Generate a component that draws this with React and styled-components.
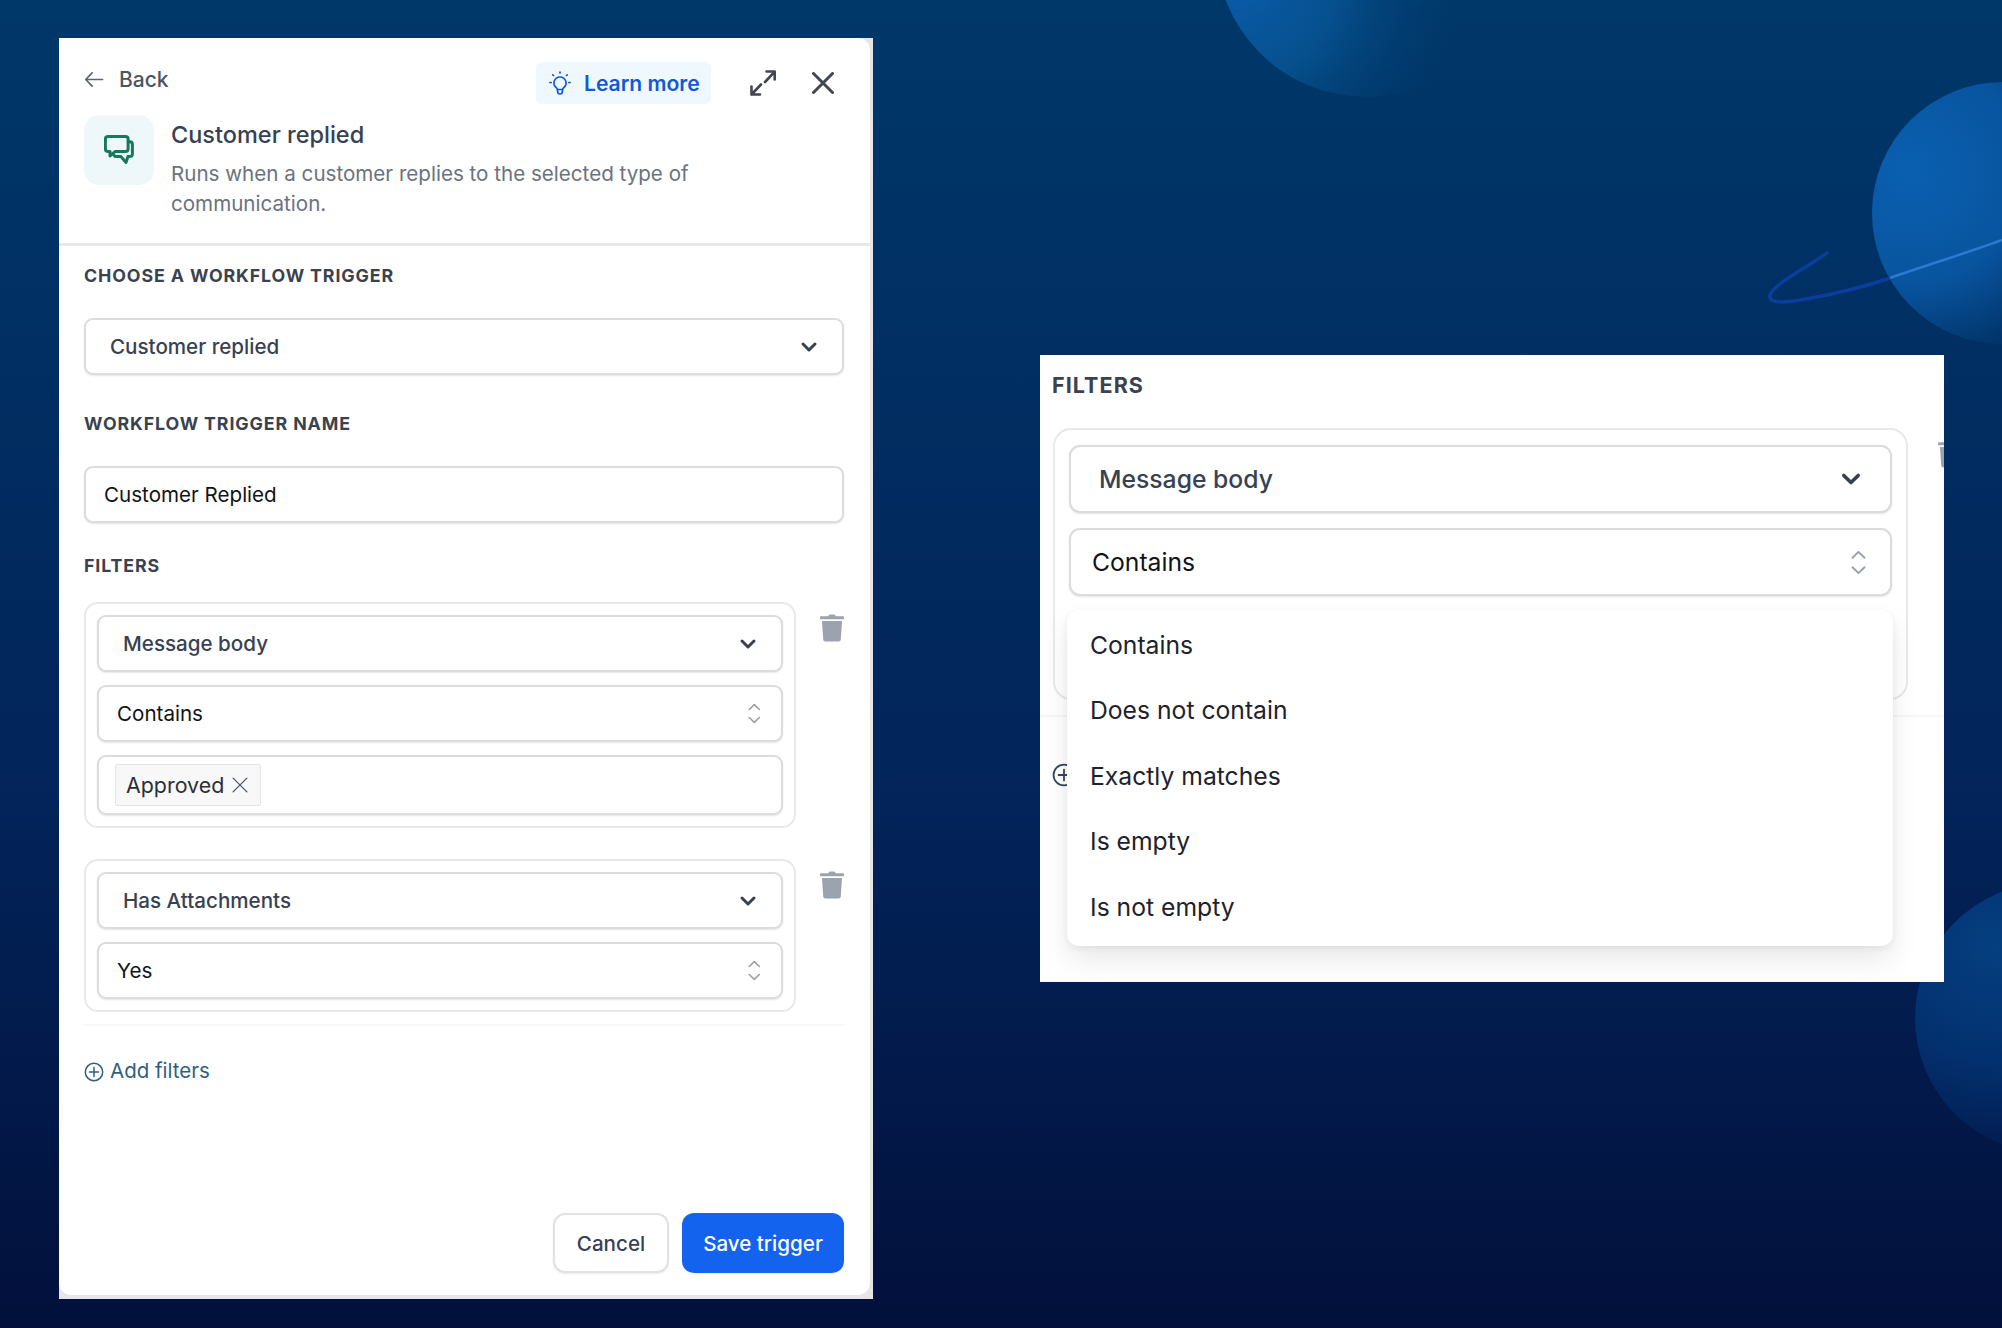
import React from 'react';
import styled, { createGlobalStyle } from 'styled-components';

const GlobalStyle = createGlobalStyle`
  html, body {
    margin: 0;
    padding: 0;
    background: #02133f;
    font-family: Inter, "Liberation Sans", sans-serif;
  }
  * { box-sizing: border-box; }
`;

const Stage = styled.div`
  position: relative;
  width: 2002px;
  height: 1328px;
  overflow: hidden;
  display: flex;
  align-items: flex-start;
  gap: 167px;
  padding: 38px 0 0 59px;
  background: linear-gradient(180deg, #003869 0%, #012f63 26%, #02245a 60%, #021a4b 80%, #02103b 100%);
`;

const Backdrop = styled.svg`
  position: absolute;
  inset: 0;
`;

const LeftPanel = styled.div`
  position: relative;
  width: 814px;
  height: 1261px;
  flex: none;
  padding: 0 3px 4px 0;
  background: #e6e6e8;
`;

const PanelInner = styled.div`
  display: flex;
  flex-direction: column;
  height: 100%;
  background: #fff;
  border-radius: 0 12px 12px 12px;
`;

const TopRow = styled.div`
  display: flex;
  align-items: flex-start;
  padding: 24px 36px 0 25px;
`;

const BackLink = styled.a`
  display: flex;
  align-items: center;
  gap: 15px;
  height: 34px;
  font-size: 21px;
  font-weight: 500;
  color: #4b5563;
`;

const TopActions = styled.div`
  display: flex;
  align-items: center;
  margin-left: auto;
  height: 42px;
`;

const LearnMore = styled.button`
  display: flex;
  align-items: center;
  gap: 13px;
  height: 42px;
  width: 175px;
  padding: 0 0 0 13px;
  border: 0;
  border-radius: 6px;
  background: #eff8fe;
  color: #1358d8;
  font: 600 21.1px Inter, sans-serif;
`;

const IconButton = styled.span`
  display: flex;
  margin-left: ${({ $gap }) => $gap}px;
  color: #41464f;
`;

const Summary = styled.div`
  display: flex;
  gap: 17px;
  padding: 11px 25px 24px;
  border-bottom: 3px solid #e8e8ea;
`;

const IconTile = styled.div`
  display: flex;
  align-items: center;
  justify-content: center;
  flex: none;
  width: 70px;
  height: 70px;
  border-radius: 15px;
  background: #eef8fb;
`;

const SummaryText = styled.div`
  padding-top: 5px;
`;

const Title = styled.div`
  font-size: 23.5px;
  font-weight: 500;
  line-height: 30px;
  color: #374151;
`;

const Description = styled.div`
  margin-top: 9px;
  width: 530px;
  font-size: 20.6px;
  line-height: 30px;
  color: #6b7280;
`;

const Body = styled.div`
  display: flex;
  flex: 1;
  flex-direction: column;
  padding: 18px 26px 22px 25px;
`;

const Label = styled.div`
  font-size: ${({ $large }) => ($large ? 21.5 : 17.8)}px;
  font-weight: 700;
  line-height: 24px;
  letter-spacing: 0.05em;
  color: #3a4250;
  margin-top: ${({ $top }) => $top || 0}px;
  margin-bottom: ${({ $bottom }) => $bottom}px;
`;

const rightPadding = ({ $large, $inset }) => {
  if ($large) return $inset ? 27 : 24;
  return $inset ? 23 : 20;
};

const leftPadding = ({ $large, $inset }) => {
  if ($large) return $inset ? 28 : 21;
  return $inset ? 24 : 18;
};

const Field = styled.div`
  display: flex;
  align-items: center;
  justify-content: space-between;
  flex: none;
  height: ${({ $large }) => ($large ? 68 : 57)}px;
  padding: 0 ${rightPadding}px 0 ${leftPadding}px;
  background: #fff;
  border: 2px solid #dcdcdf;
  border-radius: ${({ $large }) => ($large ? 11 : 9)}px;
  box-shadow: 0 1px 2px rgba(0, 0, 0, 0.1);
  font-size: ${({ $large }) => ($large ? 24.7 : 20.6)}px;
  font-weight: ${({ $muted }) => ($muted ? 500 : 400)};
  color: ${({ $muted }) => ($muted ? '#374151' : '#111318')};
`;

const Chips = styled(Field)`
  height: 60px;
  padding: 0 0 0 16px;
`;

const Chip = styled.span`
  display: flex;
  align-items: center;
  gap: 8px;
  height: 42px;
  padding: 0 12px 0 10px;
  background: #f8f8f9;
  border: 1px solid #e4e4e7;
  border-radius: 2px;
  font-size: 21.4px;
  color: #2b2f36;
`;

const FilterRow = styled.div`
  display: flex;
  align-items: flex-start;
  gap: 24px;
  margin-bottom: ${({ $bottom }) => $bottom}px;
`;

const FilterCard = styled.div`
  display: flex;
  flex-direction: column;
  gap: 13px;
  flex: none;
  width: 712px;
  padding: 11px;
  border: 2px solid #e9e9eb;
  border-radius: 14px;
`;

const TrashSlot = styled.span`
  display: flex;
  flex: none;
  margin-top: 12px;
`;

const FaintRule = styled.div`
  height: 2px;
  background: #f8f8f8;
`;

const AddFilters = styled.div`
  display: flex;
  align-items: center;
  gap: 6px;
  margin-top: 32px;
  height: 24px;
  font-size: 20.5px;
  color: #2f5f80;
  svg { margin-top: 3px; }
`;

const Footer = styled.div`
  display: flex;
  justify-content: flex-end;
  gap: 13px;
  margin-top: auto;
`;

const FooterButton = styled.button`
  height: 60px;
  width: ${({ $primary }) => ($primary ? 162 : 116)}px;
  border: ${({ $primary }) => ($primary ? '0' : '2px solid #e2e2e5')};
  border-radius: 12px;
  background: ${({ $primary }) => ($primary ? '#1463ef' : '#fff')};
  color: ${({ $primary }) => ($primary ? '#fff' : '#374151')};
  box-shadow: 0 1px 2px rgba(0, 0, 0, 0.08);
  font: 500 20.6px Inter, sans-serif;
`;

const RightPanel = styled.div`
  position: relative;
  flex: none;
  width: 904px;
  height: 627px;
  margin-top: 317px;
  padding-top: 18px;
  overflow: hidden;
  background: #fff;
`;

const RightLabelRow = styled.div`
  padding-left: 12px;
`;

const RightRow = styled.div`
  display: flex;
  align-items: flex-start;
  gap: 30px;
  padding-left: 13px;
`;

const RightCard = styled.div`
  position: relative;
  display: flex;
  flex-direction: column;
  gap: 15px;
  flex: none;
  width: 855px;
  height: 272px;
  padding: 15px 14px;
  border: 2px solid #e9e9eb;
  border-radius: 18px;
`;

const Menu = styled.ul`
  position: absolute;
  left: 12px;
  top: 180px;
  z-index: 2;
  width: 826px;
  height: 336px;
  margin: 0;
  padding: 2px 0 0;
  list-style: none;
  background: #fff;
  border-radius: 12px;
  box-shadow: 0 14px 28px rgba(0, 0, 0, 0.09), 0 2px 6px rgba(0, 0, 0, 0.06);
`;

const MenuItem = styled.li`
  display: flex;
  align-items: center;
  height: 65.5px;
  padding-left: 23px;
  font-size: 24.7px;
  color: #1d222c;
`;

const RightRule = styled.div`
  height: 2px;
  margin-top: 15px;
  background: #f6f6f6;
`;

const RightAdd = styled.div`
  display: flex;
  margin-top: 46px;
  padding-left: 12px;
`;

const Chevron = ({ size = 20 }) => (
  <svg width={size} height={size} viewBox="0 0 20 20" fill="none" stroke="#374151" strokeWidth="3" strokeLinecap="round" strokeLinejoin="round">
    <path d="M4 7l6 6 6-6" />
  </svg>
);

const UpDown = ({ height = 21 }) => (
  <svg width={height * 0.6} height={height} viewBox="0 0 12 20" fill="none" stroke="#9a9ea6" strokeWidth="1.500" strokeLinecap="round" strokeLinejoin="round">
    <path d="M1.200 6.200L6 1.500l4.800 4.700M1.200 13.800L6 18.500l4.800-4.700" />
  </svg>
);

const Trash = () => (
  <svg width="24" height="28" viewBox="0 0 24 28" fill="#9ca3af">
    <path d="M8.500 2.200C8.800 1 9.600.6 10.600.6h2.800c1 0 1.800.4 2.100 1.600H23c.6 0 1 .4 1 1v1.400c0 .3-.3.6-.6.6H.6c-.3 0-.6-.3-.6-.6V3.200c0-.6.4-1 1-1z" />
    <path d="M2 7h20l-1.200 18.200c-.1 1.300-1 2.300-2.300 2.300h-13c-1.300 0-2.200-1-2.300-2.300z" />
  </svg>
);

const PlusCircle = ({ size = 20, color = '#2f5f80' }) => (
  <svg width={size} height={size} viewBox="0 0 20 20" fill="none" stroke={color} strokeWidth="1.500" strokeLinecap="round">
    <circle cx="10" cy="10" r="8.700" />
    <path d="M10 5.500v9M5.500 10h9" />
  </svg>
);

const ChatBubbles = () => (
  <svg width="30" height="30" viewBox="0 0 30 30" fill="none" stroke="#157a5c" strokeWidth="3" strokeLinecap="round" strokeLinejoin="round">
    <path d="M4 1.500h17.500a2.600 2.600 0 0 1 2.600 2.600v9.800a2.600 2.600 0 0 1-2.600 2.600H11l-5 4.500v-4.500H4a2.600 2.600 0 0 1-2.600-2.600V4.100A2.600 2.600 0 0 1 4 1.500z" />
    <path d="M24.300 6.800h1.500a2.600 2.600 0 0 1 2.600 2.600v9.600a2.600 2.600 0 0 1-2.600 2.600h-1.900L22 27.500l-5-5.900h-5.500l-2-1.800" />
  </svg>
);

const Bulb = () => (
  <svg width="22" height="24" viewBox="0 0 22 24" fill="none" stroke="#1358d8" strokeWidth="1.700" strokeLinecap="round" strokeLinejoin="round">
    <path d="M11 6a6 6 0 0 0-3.600 10.800c.6.500.9 1 .9 1.700h5.400c0-.7.300-1.200.9-1.700A6 6 0 0 0 11 6z" />
    <path d="M8.600 18.500v1.800c0 1.600 1 2.700 2.400 2.700s2.400-1.100 2.400-2.700v-1.800" />
    <path d="M11 1v1M3.800 3.800l.7.700M18.200 3.800l-.7.700M.8 11.500h1.400M19.800 11.500h1.400" />
  </svg>
);

const ExpandIcon = () => (
  <svg width="26" height="26" viewBox="0 0 26 26" fill="none" stroke="currentColor" strokeWidth="2.600" strokeLinecap="round" strokeLinejoin="round">
    <path d="M15 12L24.500 1.800M16.500 1.500h8.200v8M11 14.500L1.500 24.500M1.500 16.500v8h8.500" />
  </svg>
);

const CloseIcon = ({ size = 22, stroke = 3, color = 'currentColor' }) => (
  <svg width={size} height={size} viewBox="0 0 22 22" fill="none" stroke={color} strokeWidth={stroke} strokeLinecap="round">
    <path d="M1.500 1.500l19 19M20.500 1.500l-19 19" />
  </svg>
);

const BackArrow = () => (
  <svg width="20" height="17" viewBox="0 0 21 18" fill="none" stroke="#5b6470" strokeWidth="1.800" strokeLinecap="round" strokeLinejoin="round">
    <path d="M19.500 9H2M8.500 2L1.800 9l6.700 7" />
  </svg>
);

const Scenery = () => (
  <Backdrop width="2002" height="1328" viewBox="0 0 2002 1328">
    <defs>
      <radialGradient id="planetTop" gradientUnits="userSpaceOnUse" cx="1235" cy="-20" r="230">
        <stop offset="0" stopColor="#0a5cab" />
        <stop offset="0.45" stopColor="#06518f" stopOpacity="0.95" />
        <stop offset="1" stopColor="#013a6f" stopOpacity="0" />
      </radialGradient>
      <radialGradient id="planetRight" gradientUnits="userSpaceOnUse" cx="1910" cy="170" r="190">
        <stop offset="0" stopColor="#0a60b0" />
        <stop offset="0.6" stopColor="#08549f" />
        <stop offset="1" stopColor="#02356b" />
      </radialGradient>
      <radialGradient id="planetLow" gradientUnits="userSpaceOnUse" cx="1995" cy="945" r="215">
        <stop offset="0" stopColor="#053f80" />
        <stop offset="0.55" stopColor="#03306e" />
        <stop offset="1" stopColor="#021a4c" />
      </radialGradient>
    </defs>
    <circle cx="1366" cy="-53" r="150" fill="url(#planetTop)" />
    <circle cx="2003" cy="213" r="131" fill="url(#planetRight)" />
    <circle cx="2050" cy="1018" r="135" fill="url(#planetLow)" />
    <path d="M1827 253C1800 272 1775 283 1770 295C1768 304 1785 303 1806 299C1840 293 1870 285 1890 278" fill="none" stroke="#0a3d9c" strokeWidth="3.500" strokeLinecap="round" />
    <path d="M1890 278C1930 264 1970 252 2002 240" fill="none" stroke="#2c7ad0" strokeWidth="2.500" />
  </Backdrop>
);

const App = () => (
  <>
    <GlobalStyle />
    <Stage>
      <Scenery />

      <LeftPanel>
        <PanelInner>
          <TopRow>
            <BackLink><BackArrow />Back</BackLink>
            <TopActions>
              <LearnMore><Bulb />Learn more</LearnMore>
              <IconButton $gap={39}><ExpandIcon /></IconButton>
              <IconButton $gap={36}><CloseIcon /></IconButton>
            </TopActions>
          </TopRow>

          <Summary>
            <IconTile><ChatBubbles /></IconTile>
            <SummaryText>
              <Title>Customer replied</Title>
              <Description>Runs when a customer replies to the selected type of communication.</Description>
            </SummaryText>
          </Summary>

          <Body>
            <Label $bottom={30}>CHOOSE A WORKFLOW TRIGGER</Label>
            <Field $muted $inset>Customer replied<Chevron /></Field>

            <Label $top={37} $bottom={30}>WORKFLOW TRIGGER NAME</Label>
            <Field>Customer Replied</Field>

            <Label $top={31} $bottom={24}>FILTERS</Label>
            <FilterRow $bottom={31}>
              <FilterCard>
                <Field $muted $inset>Message body<Chevron /></Field>
                <Field>Contains<UpDown /></Field>
                <Chips>
                  <Chip>Approved<CloseIcon size={16} stroke={1.800} color="#4b5563" /></Chip>
                </Chips>
              </FilterCard>
              <TrashSlot><Trash /></TrashSlot>
            </FilterRow>
            <FilterRow $bottom={12}>
              <FilterCard>
                <Field $muted $inset>Has Attachments<Chevron /></Field>
                <Field>Yes<UpDown /></Field>
              </FilterCard>
              <TrashSlot><Trash /></TrashSlot>
            </FilterRow>
            <FaintRule />

            <AddFilters><PlusCircle />Add filters</AddFilters>

            <Footer>
              <FooterButton>Cancel</FooterButton>
              <FooterButton $primary>Save trigger</FooterButton>
            </Footer>
          </Body>
        </PanelInner>
      </LeftPanel>

      <RightPanel>
        <RightLabelRow><Label $large $bottom={31}>FILTERS</Label></RightLabelRow>
        <RightRow>
          <RightCard>
            <Field $large $muted $inset>Message body<Chevron size={24} /></Field>
            <Field $large>Contains<UpDown height={25} /></Field>
            <Menu>
              {['Contains', 'Does not contain', 'Exactly matches', 'Is empty', 'Is not empty'].map(item => (
                <MenuItem key={item}>{item}</MenuItem>
              ))}
            </Menu>
          </RightCard>
          <TrashSlot><Trash /></TrashSlot>
        </RightRow>
        <RightRule />
        <RightAdd><PlusCircle size={24} color="#33475b" /></RightAdd>
      </RightPanel>
    </Stage>
  </>
);

export default App;
